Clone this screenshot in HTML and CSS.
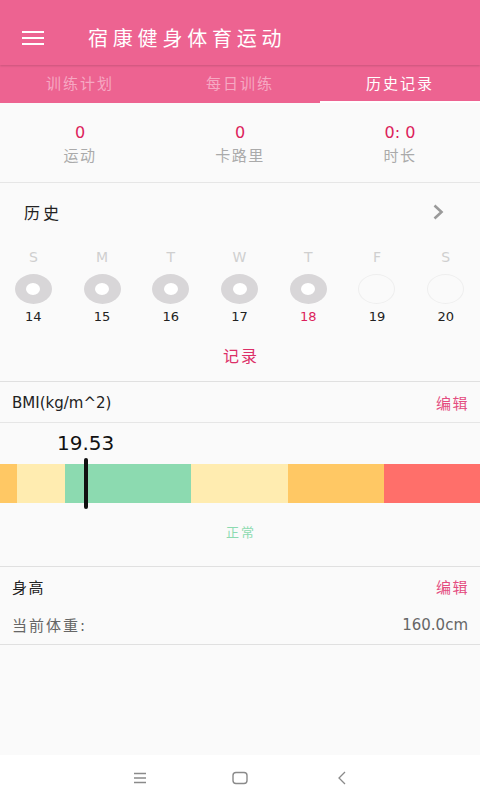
FILE: index.html
```html
<!DOCTYPE html>
<html lang="zh">
<head>
    <meta charset="UTF-8">
    <meta name="viewport" content="width=device-width, initial-scale=1.0">
    <title>宿康健身体育运动</title>
    <link rel="stylesheet" href="styles.css">
</head>
<body>
    <div class="app">
        <div class="toolbar">
            <span class="menu-icon">
                <svg width="22" height="14" viewBox="0 0 22 14">
                    <rect x="0" y="0" width="22" height="2" fill="#fff"/>
                    <rect x="0" y="6" width="22" height="2" fill="#fff"/>
                    <rect x="0" y="12" width="22" height="2" fill="#fff"/>
                </svg>
            </span>
            <h1 class="title">宿康健身体育运动</h1>
        </div>

        <div class="tabs">
            <div class="tab">训练计划</div>
            <div class="tab">每日训练</div>
            <div class="tab active">历史记录</div>
        </div>

        <div class="stats">
            <div class="stat">
                <div class="stat-value">0</div>
                <div class="stat-label">运动</div>
            </div>
            <div class="stat">
                <div class="stat-value">0</div>
                <div class="stat-label">卡路里</div>
            </div>
            <div class="stat">
                <div class="stat-value">0: 0</div>
                <div class="stat-label">时长</div>
            </div>
        </div>

        <div class="history">
            <div class="history-head">
                <span>历史</span>
                <svg class="chevron" width="12" height="16" viewBox="0 0 12 16">
                    <path d="M2.5 1.5 L9.5 8 L2.5 14.5" fill="none" stroke="#9a9a9a" stroke-width="2.6"/>
                </svg>
            </div>
            <div class="week">
                <div class="day"><span class="letter">S</span><span class="dot done"></span><span class="date">14</span></div>
                <div class="day"><span class="letter">M</span><span class="dot done"></span><span class="date">15</span></div>
                <div class="day"><span class="letter">T</span><span class="dot done"></span><span class="date">16</span></div>
                <div class="day"><span class="letter">W</span><span class="dot done"></span><span class="date">17</span></div>
                <div class="day"><span class="letter">T</span><span class="dot done"></span><span class="date today">18</span></div>
                <div class="day"><span class="letter">F</span><span class="dot"></span><span class="date">19</span></div>
                <div class="day"><span class="letter">S</span><span class="dot"></span><span class="date">20</span></div>
            </div>
            <div class="record-link">记录</div>
        </div>

        <div class="row-head">
            <span class="bmi-title">BMI(kg/m^2)</span>
            <span class="edit">编辑</span>
        </div>

        <div class="bmi">
            <div class="bmi-value">19.53</div>
            <div class="bmi-bar">
                <span class="seg seg-orange" style="width: 17px"></span>
                <span class="seg seg-yellow" style="width: 48px"></span>
                <span class="seg seg-green" style="width: 126px"></span>
                <span class="seg seg-yellow" style="width: 97px"></span>
                <span class="seg seg-orange" style="width: 96px"></span>
                <span class="seg seg-red" style="width: 96px"></span>
                <span class="marker" style="left: 84px"></span>
            </div>
            <div class="bmi-status">正常</div>
        </div>

        <div class="height">
            <div class="height-head">
                <span>身高</span>
                <span class="edit">编辑</span>
            </div>
            <div class="height-row">
                <span class="weight-label">当前体重:</span>
                <span>160.0cm</span>
            </div>
        </div>

        <div class="spacer"></div>

        <div class="navbar">
            <svg class="nav-menu" width="16" height="12" viewBox="0 0 16 12">
                <path d="M2 1.5 H14 M2 6 H14 M2 10.5 H14" stroke="#8a8a8a" stroke-width="1.3"/>
            </svg>
            <svg class="nav-home" width="16" height="14" viewBox="0 0 16 14">
                <rect x="1" y="1.5" width="14" height="11" rx="3" fill="none" stroke="#8a8a8a" stroke-width="1.4"/>
            </svg>
            <svg class="nav-back" width="10" height="14" viewBox="0 0 10 14">
                <path d="M8 1 L2 7 L8 13" fill="none" stroke="#8a8a8a" stroke-width="1.3"/>
            </svg>
        </div>
    </div>
</body>
</html>
```

FILE: styles.css
```css
body {
    margin: 0;
    font-family: "DejaVu Sans", "Noto Sans CJK SC", sans-serif;
    background: #fafafa;
    color: #222;
}

.app {
    width: 480px;
    height: 800px;
    display: flex;
    flex-direction: column;
    overflow: hidden;
}

/* top bar */
.toolbar {
    height: 65px;
    background-color: #ed6391;
    display: flex;
    align-items: center;
    box-shadow: 0 1px 2px rgba(0, 0, 0, 0.15);
    position: relative;
    z-index: 1;
}

.menu-icon {
    display: flex;
    margin-left: 22px;
    margin-top: 10px;
}

.title {
    margin: 10px 0 0 44px;
    font-size: 20px;
    font-weight: normal;
    color: #fff;
    letter-spacing: 4.8px;
}

.tabs {
    height: 38px;
    background-color: #ed6391;
    display: flex;
}

.tab {
    flex: 1;
    text-align: center;
    font-size: 15px;
    line-height: 34px;
    padding-top: 2px;
    color: #f6a8c3;
    letter-spacing: 2px;
    border-bottom: 2px solid transparent;
}

.tab.active {
    color: #fff;
    border-bottom-color: #fff;
}

/* summary */
.stats {
    display: flex;
    height: 79px;
    border-bottom: 1px solid #e6e6e6;
}

.stat {
    flex: 1;
    text-align: center;
}

.stat-value {
    margin-top: 20px;
    font-size: 16px;
    color: #dc1f5c;
    line-height: 20px;
}

.stat-label {
    margin-top: 3px;
    font-size: 15px;
    color: #aaa;
    line-height: 20px;
    letter-spacing: 1.5px;
}

/* history week */
.history {
    border-bottom: 1px solid #e0e0e0;
}

.history-head {
    display: flex;
    justify-content: space-between;
    align-items: center;
    height: 58px;
    padding: 0 36px 0 24px;
    font-size: 16px;
    letter-spacing: 3px;
    color: #222;
}

.week {
    display: flex;
}

.day {
    width: 69px;
    display: flex;
    flex-direction: column;
    align-items: center;
}

.day:first-child {
    margin-left: -1px;
}

.letter {
    font-size: 14px;
    color: #cfcfcf;
    line-height: 18px;
    margin-top: 7px;
}

.dot {
    margin-top: 8px;
    width: 37px;
    height: 30px;
    border-radius: 50%;
    box-sizing: border-box;
    border: 1px solid #eeeeee;
    display: flex;
    align-items: center;
    justify-content: center;
}

.dot.done {
    background: #d8d6d8;
    border: none;
}

.dot.done::after {
    content: "";
    width: 14px;
    height: 12px;
    border-radius: 50%;
    background: #fff;
}

.date {
    margin-top: 5px;
    font-size: 13px;
    color: #222;
    line-height: 16px;
}

.date.today {
    color: #dc1f5c;
}

.record-link {
    text-align: center;
    color: #dc2f68;
    font-size: 16px;
    line-height: 22px;
    letter-spacing: 2px;
    padding: 21px 0 13px 2px;
}

/* bmi */
.row-head,
.height-head {
    display: flex;
    justify-content: space-between;
    align-items: center;
    padding: 0 11px 0 12px;
    font-size: 15px;
}

.row-head {
    height: 39px;
    border-bottom: 1px solid #e6e6e6;
    margin-top: 1px;
}

.bmi-title {
    color: #222;
}

.edit {
    color: #e44c80;
    letter-spacing: 1.5px;
}

.bmi {
    border-bottom: 1px solid #e0e0e0;
}

.bmi-value {
    margin: 7px 0 0 57px;
    font-size: 20px;
    line-height: 26px;
    color: #111;
}

.bmi-bar {
    position: relative;
    display: flex;
    height: 39px;
    margin-top: 8px;
}

.seg {
    height: 100%;
}

.seg-orange {
    background: #ffc864;
}

.seg-yellow {
    background: #ffecb0;
}

.seg-green {
    background: #8cdab0;
}

.seg-red {
    background: #ff6f6a;
}

.marker {
    position: absolute;
    top: -6px;
    width: 4px;
    height: 51px;
    border-radius: 2px;
    background: #111;
}

.bmi-status {
    text-align: center;
    color: #8cdab0;
    font-size: 13px;
    line-height: 18px;
    letter-spacing: 2px;
    padding: 21px 0 24px 2px;
}

/* height */
.height {
    border-bottom: 1px solid #e0e0e0;
}

.height-head {
    height: 38px;
    color: #222;
}

.height-head span:first-child {
    letter-spacing: 1.5px;
}

.height-row {
    display: flex;
    justify-content: space-between;
    align-items: center;
    height: 39px;
    padding: 0 12px;
    font-size: 15px;
    color: #666;
}

.weight-label {
    letter-spacing: 2px;
}

.spacer {
    flex: 1;
}

/* system nav */
.navbar {
    height: 45px;
    background: #fff;
    display: flex;
    align-items: center;
    padding-left: 132px;
}

.nav-home {
    margin-left: 84px;
}

.nav-back {
    margin-left: 89px;
}
```
